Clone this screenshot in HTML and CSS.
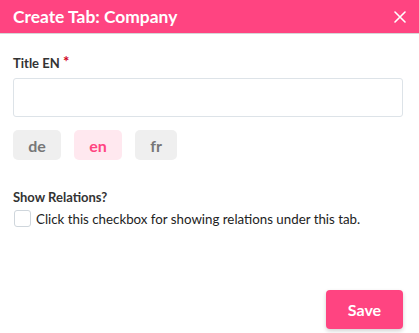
FILE: index.html
```html
<!DOCTYPE html>
<html>
<head>
<meta charset="utf-8">
<link rel="stylesheet" href="styles.css">
</head>
<body>
<div class="dialog">
  <header class="head">
    <h1 class="title">Create Tab: Company</h1>
    <button class="close" aria-label="Close">
      <svg width="12" height="12" viewBox="0 0 12 12"><path d="M1 1L11 11M11 1L1 11" stroke="#fff" stroke-width="1.6" stroke-linecap="round"/></svg>
    </button>
  </header>
  <main class="body">
    <label class="label">Title EN <span class="req">*</span></label>
    <input class="input" type="text">
    <div class="langs">
      <span class="lang">de</span>
      <span class="lang active">en</span>
      <span class="lang">fr</span>
    </div>
    <div class="label rel">Show Relations?</div>
    <label class="check">
      <span class="box"></span>
      <span>Click this checkbox for showing relations under this tab.</span>
    </label>
  </main>
  <footer class="foot">
    <button class="save">Save</button>
  </footer>
</div>
</body>
</html>
```
FILE: styles.css
```css
* { box-sizing: border-box; }
html, body { margin: 0; padding: 0; background: #fff; }
body { font-family: Lato, "Open Sans", sans-serif; color: #222; }
.dialog { width: 419px; height: 333px; display: flex; flex-direction: column; }
.head {
  height: 34px; background: #ff4481; border-bottom: 1px solid #d6d6d6;
  display: flex; align-items: center; justify-content: space-between;
  padding: 0 13px 0 13px;
}
.title { margin: 0; font-size: 17.4px; font-weight: 700; color: #fff; letter-spacing: 0; }
.close { background: none; border: 0; padding: 0; width: 12px; height: 12px; display: flex; }
.body { padding: 21px 16px 0 13px; display: flex; flex-direction: column; flex: 1; }
.label { font-size: 13px; font-weight: 700; color: #333; line-height: 16px; }
.req { color: #d0021b; font-size: 15px; vertical-align: top; line-height: 12px; }
.input {
  margin-top: 7px; height: 39px; width: 390px; border: 1px solid #dde3e8;
  border-radius: 3px; outline: none;
}
.langs { display: flex; gap: 13px; margin-top: 13px; }
.lang {
  height: 30px; padding: 0 12px; background: #efefef; color: #777;
  border-radius: 5px; font-weight: 700; font-size: 16px;
  display: flex; align-items: center; justify-content: center; min-width: 42px;
}
.lang:first-child { width: 48px; }
.lang.active { background: #ffe8ef; color: #ff4481; width: 48px; }
.rel { margin-top: 29px; }
.check { display: flex; align-items: center; gap: 5px; margin-top: 5px; font-size: 13.3px; color: #222; margin-left: 1px; }
.box { width: 17px; height: 17px; border: 1.5px solid #cfd6dc; border-radius: 3px; flex: none; }
.foot { display: flex; justify-content: flex-end; padding: 0 16px 4px 0; }
.save {
  width: 77px; height: 39px; background: #ff4481; color: #fff; border: 0;
  border-radius: 4px; font-family: inherit; font-size: 16px; font-weight: 700;
  box-shadow: 0 2px 4px rgba(0,0,0,0.18);
}
```
